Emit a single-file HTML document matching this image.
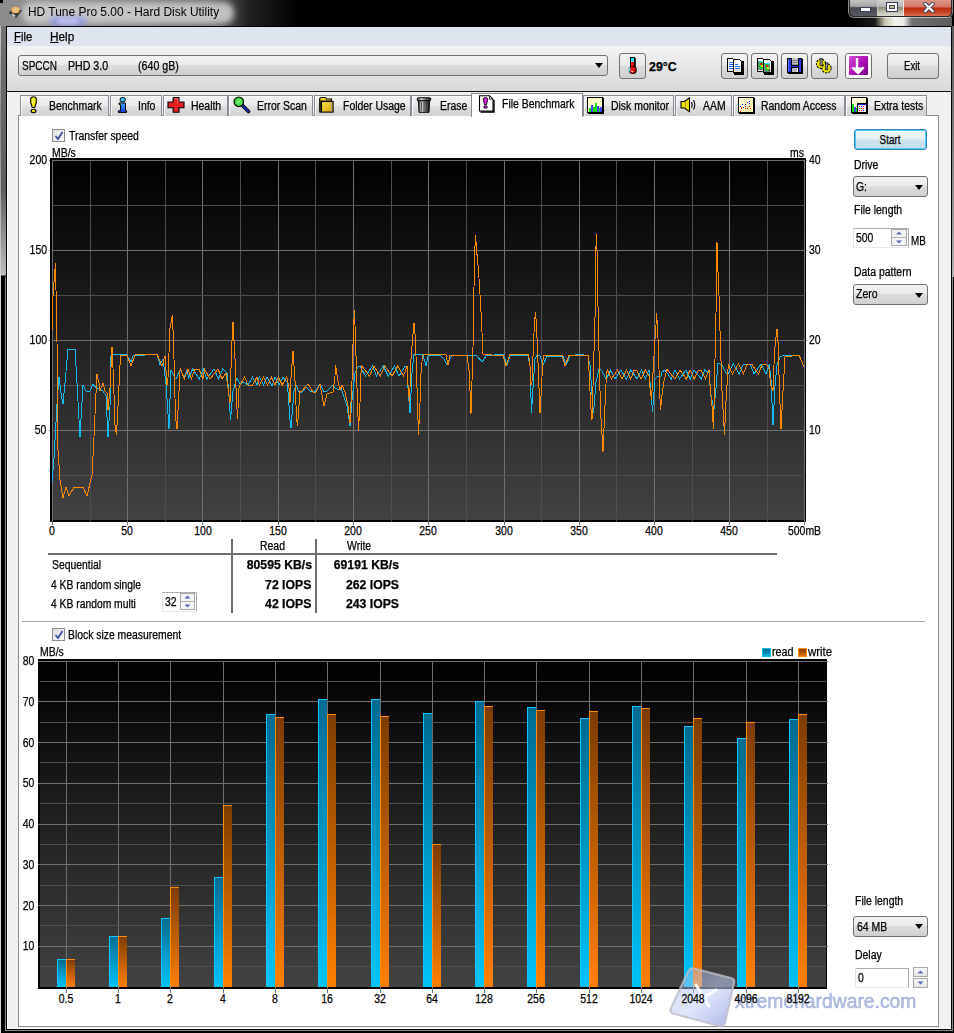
<!DOCTYPE html>
<html><head><meta charset="utf-8">
<style>
*{box-sizing:border-box}
html,body{margin:0;padding:0}
body{width:954px;height:1033px;overflow:hidden;position:relative;background:#000;font-family:"Liberation Sans",sans-serif;font-size:11px;color:#000}
.a{position:absolute}
.t{position:absolute;white-space:pre;line-height:1;font-size:12px;-webkit-text-stroke:0.25px currentColor}
.btn{position:absolute;border:1px solid #707070;border-radius:3px;background:linear-gradient(#f2f2f2 0%,#ebebeb 45%,#dddddd 50%,#cfcfcf 100%)}
.tab{position:absolute;top:95px;height:21px;border:1px solid #898c95;border-bottom:none;box-shadow:inset 1px 1px 0 rgba(255,255,255,.8);background:linear-gradient(#f2f2f2 0%,#ebebeb 45%,#dddddd 55%,#d2d2d2 100%)}
.tab .l{position:absolute;top:6px;white-space:pre;font-size:11px;line-height:1;letter-spacing:-0.3px}
.ic{position:absolute}
</style></head><body>
<!-- window frame -->
<div class="a" style="left:0;top:0;width:954px;height:277px;background:linear-gradient(to bottom,#7a7a7a 0,#6c6c6c 60px,#5e5e5e 190px,#bdbdbd 275px,#000 276px)"></div>
<div class="a" style="left:0;top:0;width:1px;height:277px;background:linear-gradient(#d8d8d8,#888 120px,#d0d0d0 270px)"></div>
<div class="a" style="left:0;top:0;width:954px;height:26px;background:linear-gradient(to right,#8c8c8c 0,#8e8e8e 30px,#6a6a6a 210px,#202020 250px,#000 300px,#000 100%)"></div>
<div class="a" style="left:0;top:0;width:3px;height:3px;background:#000"></div>
<div class="a" style="left:22px;top:2px;width:212px;height:22px;background:rgba(205,205,205,.9);border-radius:10px;filter:blur(3px)"></div>
<div class="a" style="left:50px;top:17px;width:36px;height:9px;background:rgba(120,130,255,.6);border-radius:6px;filter:blur(3px)"></div><div class="a" style="left:58px;top:19px;width:20px;height:5px;background:rgba(230,230,255,.6);border-radius:4px;filter:blur(2px)"></div>
<div class="a" style="left:849px;top:17px;width:103px;height:9px;background:linear-gradient(to right,#000 0,#181818 26px,#c8c8b0 36px,#f4f4ec 46px,#e8e8e8 55px,#707070 63px,#5c5c5c 100%)"></div>
<div class="a" style="left:952px;top:26px;width:2px;height:251px;background:linear-gradient(#5a5a5a,#9a9a9a 200px,#b0b0b0)"></div>
<!-- app icon -->
<svg class="a" style="left:8px;top:5px" width="15" height="14" viewBox="0 0 15 14">
<path d="M0.5 8 L6 2.5 L14 5.5 L8 13 Z" fill="#383838"/><ellipse cx="7.5" cy="5" rx="4.2" ry="3.2" fill="#f2b860"/><circle cx="7.5" cy="5" r="1.2" fill="#d0d0d0"/><path d="M4 9 L7 11.5" stroke="#c8c8c8" stroke-width="2"/>
</svg>
<!-- caption buttons -->
<div class="a" style="left:848px;top:0;width:105px;height:18px;border:1px solid rgba(255,255,255,.55);border-top:none;border-radius:0 0 6px 6px"></div>
<div class="a" style="left:849px;top:0;width:103px;height:17px;border:1px solid #2a2a2a;border-top:none;border-radius:0 0 5px 5px;overflow:hidden">
 <div class="a" style="left:0;top:0;width:28px;height:16px;background:linear-gradient(#c4c4c4 0,#a4a4a4 40%,#484850 48%,#5a5a62 100%);border-right:1px solid #c8c8c8"></div>
 <div class="a" style="left:28px;top:0;width:26px;height:16px;background:linear-gradient(#d0d0d0 0,#b4b4b4 40%,#8c8a70 48%,#c8c8b8 80%,#d8d8d8 100%);border-right:1px solid #f0e0e0"></div>
 <div class="a" style="left:54px;top:0;width:48px;height:16px;background:linear-gradient(#dc9888 0,#d47866 40%,#c02c10 52%,#c84a2c 80%,#d87050 100%)"></div>
 <div class="a" style="left:11px;top:8px;width:9px;height:3px;background:#fff;outline:1px solid #3a3f5c"></div>
 <div class="a" style="left:37px;top:3px;width:10px;height:8px;border:2px solid #fff;outline:1px solid #3a3f5c;background:#c8c4a0;box-shadow:inset 0 0 0 1px #3a3f5c"></div>
 <svg class="a" style="left:73px;top:2px" width="12" height="11" viewBox="0 0 12 11"><path d="M2.2 1.8L9.8 9.2M9.8 1.8L2.2 9.2" stroke="#3a3f5c" stroke-width="4" stroke-linecap="round"/><path d="M2.2 1.8L9.8 9.2M9.8 1.8L2.2 9.2" stroke="#fff" stroke-width="2.2" stroke-linecap="round"/></svg>
</div>
<!-- client -->
<div class="a" style="left:6px;top:26px;width:946px;height:1004px;background:#000"></div>
<div class="a" style="left:7px;top:27px;width:944px;height:1002px;background:#f0f0f0"></div>
<div class="a" style="left:0;top:277px;width:1px;height:756px;background:#d8d8d8"></div>
<div class="a" style="left:5px;top:277px;width:1px;height:754px;background:#8c8c8c"></div>
<div class="a" style="left:5px;top:1030px;width:948px;height:1px;background:#8c8c8c"></div>
<div class="a" style="left:952px;top:277px;width:1px;height:754px;background:#8c8c8c"></div>
<div class="a" style="left:7px;top:92px;width:1px;height:937px;background:#fff"></div>
<div class="a" style="left:7px;top:1028px;width:944px;height:1px;background:#fff"></div>
<!-- menu bar -->
<div class="a" style="left:7px;top:27px;width:944px;height:19px;background:#dee5ee"></div>
<!-- toolbar -->
<div class="a" style="left:7px;top:46px;width:944px;height:45px;background:linear-gradient(#f3f3f3,#d9d9d9)"></div>
<div class="a" style="left:7px;top:91px;width:944px;height:1px;background:#101010"></div>
<div class="btn" style="left:18px;top:55px;width:590px;height:21px"></div>
<svg class="a" style="left:595px;top:63px" width="9" height="6"><path d="M0 0H8L4 5Z" fill="#000"/></svg>
<div class="btn" style="left:619px;top:53px;width:27px;height:26px"></div>
<div class="btn" style="left:721px;top:53px;width:27px;height:26px"></div>
<div class="btn" style="left:751px;top:53px;width:27px;height:26px"></div>
<div class="btn" style="left:781px;top:53px;width:27px;height:26px"></div>
<div class="btn" style="left:811px;top:53px;width:27px;height:26px"></div>
<div class="btn" style="left:845px;top:53px;width:27px;height:26px"></div>
<div class="btn" style="left:887px;top:53px;width:52px;height:26px"></div>

<!-- tabs -->
<div class="a" style="left:18px;top:115px;width:921px;height:912px;border:1px solid #898c95;background:#fff"></div>
<div class="tab" style="left:20px;width:89px"></div>
<div class="tab" style="left:110px;width:52px"></div>
<div class="tab" style="left:163px;width:65px"></div>
<div class="tab" style="left:228px;width:85px"></div>
<div class="tab" style="left:314px;width:97px"></div>
<div class="tab" style="left:411px;width:61px"></div>
<div class="tab" style="left:583px;width:91px"></div>
<div class="tab" style="left:675px;width:57px"></div>
<div class="tab" style="left:733px;width:112px"></div>
<div class="tab" style="left:845px;width:82px"></div>
<div class="a" style="left:471px;top:93px;width:112px;height:24px;border:1px solid #898c95;border-bottom:none;background:#fff"></div>
<svg class="a" style="left:0;top:0" width="954" height="200" viewBox="0 0 954 200"><defs>
<linearGradient id="docg" x1="0" y1="0" x2="0" y2="1"><stop offset="0" stop-color="#fff"/><stop offset="1" stop-color="#e0e0e0"/></linearGradient>
<linearGradient id="purg" x1="0" y1="0" x2="1" y2="1"><stop offset="0" stop-color="#d050d8"/><stop offset=".5" stop-color="#b010b8"/><stop offset="1" stop-color="#780080"/></linearGradient>
<linearGradient id="infog" x1="0" y1="0" x2="0" y2="1"><stop offset="0" stop-color="#40b0ff"/><stop offset="1" stop-color="#1040e8"/></linearGradient>
<linearGradient id="foldg" x1="0" y1="0" x2="1" y2="1"><stop offset="0" stop-color="#f8e050"/><stop offset="1" stop-color="#d8a000"/></linearGradient>
<linearGradient id="trashg" x1="0" y1="0" x2="1" y2="0"><stop offset="0" stop-color="#404040"/><stop offset=".3" stop-color="#e0e0e0"/><stop offset=".6" stop-color="#707070"/><stop offset="1" stop-color="#202020"/></linearGradient>
<linearGradient id="ylg" x1="0" y1="0" x2="1" y2="1"><stop offset="0" stop-color="#ffffe8"/><stop offset="1" stop-color="#fff8a0"/></linearGradient>
</defs><g shape-rendering="crispEdges">
<rect x="630" y="57" width="5" height="13" fill="#000"/>
<rect x="631" y="58" width="3" height="4" fill="#30e0f0"/>
<rect x="631" y="62" width="3" height="8" fill="#f01010"/>
<rect x="635" y="58" width="1" height="12" fill="#303030"/>
</g>
<circle cx="632.8" cy="70" r="4" fill="#000"/>
<circle cx="632.6" cy="69.8" r="3.1" fill="#f01010"/>
<rect x="628.6" y="67.5" width="1.6" height="4" fill="#50d8e8"/>
<path d="M631 70.5 Q631.5 72 633 71.8" stroke="#fff" stroke-width="1" fill="none"/>
<g shape-rendering="crispEdges">
<path d="M727.5 58.5H732.5L734.5 60.5V71.5H727.5Z" fill="#fff" stroke="#000" stroke-width="1"/>
<rect x="735" y="60" width="1" height="12" fill="#000"/>
<rect x="729" y="62" width="4" height="1" fill="#1a6cff"/>
<rect x="729" y="64" width="4" height="1" fill="#1a6cff"/>
<rect x="729" y="66" width="4" height="1" fill="#1a6cff"/>
<rect x="729" y="68" width="4" height="1" fill="#1a6cff"/>
<path d="M733.5 59.5H739.5L741.5 61.5V72.5H733.5Z" fill="url(#docg)" stroke="#000"/>
<rect x="742" y="61" width="1.5" height="13" fill="#000"/><rect x="734" y="73" width="9.5" height="1.5" fill="#000"/>
<rect x="735" y="64" width="3" height="1" fill="#1a6cff"/><rect x="735" y="66" width="5" height="1" fill="#1a6cff"/><rect x="735" y="68" width="5" height="1" fill="#1a6cff"/><rect x="735" y="70" width="5" height="1" fill="#e8d8c8"/>
<path d="M757.5 58.5H762.5L764.5 60.5V71.5H757.5Z" fill="#fff" stroke="#000" stroke-width="1"/>
<rect x="765" y="60" width="1" height="12" fill="#000"/>
<rect x="758.5" y="61.5" width="5" height="8" fill="#20c040" stroke="#808080" stroke-width="1"/>
<rect x="759" y="61" width="5" height="1" fill="#20e0ff"/>
<rect x="760" y="63" width="2" height="2" fill="#e02020"/><rect x="761" y="65" width="2" height="2" fill="#f0e000"/>
<path d="M763.5 59.5H769.5L771.5 61.5V72.5H763.5Z" fill="url(#docg)" stroke="#000"/>
<rect x="772" y="61" width="1.5" height="13" fill="#000"/><rect x="764" y="73" width="9.5" height="1.5" fill="#000"/>
<rect x="764.5" y="63.5" width="5" height="8" fill="#20c040" stroke="#808080" stroke-width="1"/>
<rect x="765" y="63" width="5" height="1" fill="#20e0ff"/>
<rect x="766" y="65" width="2" height="2" fill="#e02020"/><rect x="767" y="67" width="2" height="2" fill="#f0e000"/><rect x="769" y="70" width="1" height="1" fill="#000"/>
<rect x="787" y="58" width="15" height="15" fill="#000"/>
<rect x="788" y="59" width="13" height="13" fill="#2838e8"/>
<rect x="788" y="59" width="1" height="12" fill="#6070ff"/>
<rect x="791" y="58" width="8" height="8" fill="#000"/><rect x="792" y="58" width="6" height="7" fill="#c8c8c8"/>
<rect x="792" y="60" width="6" height="1" fill="#808080"/><rect x="792" y="62" width="6" height="1" fill="#808080"/><rect x="792" y="64" width="6" height="1" fill="#909090"/>
<rect x="791" y="67" width="8" height="6" fill="#000"/><rect x="792" y="68" width="6" height="4" fill="#b8b8b8"/><rect x="797" y="68" width="1" height="4" fill="#fff"/>
<rect x="802" y="59" width="1" height="15" fill="#000"/><rect x="788" y="73" width="15" height="1" fill="#000"/>
</g>
<circle cx="821" cy="63.8" r="4.6" fill="#f0e800" stroke="#000" stroke-width="1.1" stroke-dasharray="2 1.2"/>
<circle cx="821" cy="63.8" r="3.2" fill="#e8e000"/>
<rect x="820" y="58.3" width="2.2" height="7" fill="#909090" stroke="#000" stroke-width=".6"/>
<circle cx="826.6" cy="68.3" r="4.6" fill="#f0e800" stroke="#000" stroke-width="1.1" stroke-dasharray="2 1.2"/>
<circle cx="826.6" cy="68.3" r="3.2" fill="#e8e000"/>
<rect x="825.6" y="62.8" width="2.2" height="7" fill="#909090" stroke="#000" stroke-width=".6"/>
<rect x="846" y="54" width="25" height="24" rx="2" fill="#f8f8f8"/>
<rect x="849" y="56" width="19" height="19" rx="1" fill="url(#purg)"/>
<path d="M857 58V68M852.3 67.3L858 73L863.7 67.3" stroke="#fff" stroke-width="2.4" fill="none"/>
<path d="M852 67.5H864L858 73.5Z" fill="#fff"/>
<path d="M30.6 99 Q31 96.8 33.5 96.8 Q36 96.8 36.4 99 L36.2 103 L34.7 107.5 H32.3 L30.8 103 Z" fill="#f0f000" stroke="#000" stroke-width="1.1"/>
<path d="M32.2 98.5 H33.4 V104 H32.6Z" fill="#ffffa0"/>
<ellipse cx="33.5" cy="111" rx="2.4" ry="1.7" fill="#e8e800" stroke="#000" stroke-width="1.1"/>
<rect x="120.2" y="97.6" width="5" height="4.2" rx="1.5" fill="#40c8ff" stroke="#000" stroke-width="1"/>
<path d="M119 103 H125.5 V110.8 H126.6 V112.4 H118.4 V110.8 H120.6 V104.6 H119Z" fill="url(#infog)" stroke="#000" stroke-width="1"/>
<path d="M173.2 97.6H179V102H184V107.8H179V112.3H173.2V107.8H168V102H173.2Z" fill="#e82020" stroke="#000" stroke-width="1.1"/>
<path d="M174 98.5H178V103" stroke="#ff8080" stroke-width=".8" fill="none"/>
<path d="M242.5 105.5 L248.5 111.5" stroke="#000" stroke-width="3.6" stroke-linecap="round"/>
<path d="M242.5 105.5 L248.3 111.3" stroke="#1828a8" stroke-width="2" stroke-linecap="round"/>
<circle cx="238.8" cy="101.8" r="4.8" fill="#30c030" stroke="#000" stroke-width="1.1"/>
<circle cx="238.8" cy="101.8" r="3.2" fill="#50e050"/>
<path d="M237 103.5 L240.5 100" stroke="#c0ffc0" stroke-width="1"/>
<path d="M319.7 98.7 Q320 97.5 321.5 97.5 H325 Q326 97.5 326.5 99 H331.5 V101 H321 V112 H319.7Z" fill="#f0d030" stroke="#000" stroke-width="1.1"/>
<rect x="321.5" y="101.5" width="11.6" height="10.6" fill="url(#foldg)" stroke="#000" stroke-width="1.1"/>
<rect x="331" y="102.2" width=".8" height="9.4" fill="#a0a0a0"/>
<rect x="417.3" y="97.8" width="13.4" height="3" rx=".8" fill="url(#trashg)" stroke="#000" stroke-width="1"/>
<path d="M418.5 100.8 H429.5 L429 112.3 H419Z" fill="url(#trashg)" stroke="#000" stroke-width="1"/>
<path d="M421.5 102V111M424 102V111M426.5 102V111" stroke="#404040" stroke-width=".8"/>
<path d="M479.5 95.7H489.5L493 99.2V111H479.5Z" fill="#fff" stroke="#000" stroke-width="1.1"/>
<path d="M494 100V112H480.5" stroke="#000" stroke-width="1.4" fill="none"/>
<path d="M489.5 95.7V99.2H493" stroke="#000" stroke-width=".8" fill="none"/>
<path d="M483.3 99.3 Q483.5 97.5 485.5 97.5 Q487.5 97.5 487.7 99.3 L486.5 104.5 H484.5Z" fill="#e020e8" stroke="#000" stroke-width=".9"/>
<ellipse cx="485.5" cy="107" rx="1.8" ry="1.3" fill="#e020e8" stroke="#000" stroke-width=".9"/>
<g shape-rendering="crispEdges">
<rect x="587.5" y="97.5" width="15" height="15" fill="#ffffc8" stroke="#000"/>
<rect x="603" y="98" width="1" height="15" fill="#000"/><rect x="588" y="113" width="16" height="1" fill="#000"/>
<rect x="589" y="108" width="2" height="4" fill="#10e010"/>
<rect x="591" y="105" width="2" height="7" fill="#4040ff"/>
<rect x="593" y="107" width="2" height="5" fill="#10e010"/>
<rect x="595" y="103" width="2" height="9" fill="#10e010"/>
<rect x="597" y="106" width="2" height="6" fill="#4040ff"/>
<rect x="599" y="108" width="2" height="4" fill="#10e010"/>
<rect x="600" y="107" width="2" height="5" fill="#4040ff"/>
<rect x="738.5" y="97.5" width="15" height="15" fill="url(#ylg)" stroke="#000"/>
<rect x="754" y="98" width="1" height="15" fill="#000"/><rect x="739" y="113" width="16" height="1" fill="#000"/>
<rect x="740" y="111" width="1" height="1" fill="#f00"/>
<rect x="741" y="108" width="1" height="1" fill="#f00"/>
<rect x="741" y="107" width="1" height="1" fill="#f00"/>
<rect x="740" y="106" width="1" height="1" fill="#00f"/>
<rect x="742" y="104" width="1" height="1" fill="#00f"/>
<rect x="743" y="107" width="1" height="1" fill="#00f"/>
<rect x="745" y="108" width="1" height="1" fill="#f00"/>
<rect x="745" y="106" width="1" height="1" fill="#f00"/>
<rect x="745" y="104" width="1" height="1" fill="#00f"/>
<rect x="747" y="102" width="1" height="1" fill="#00f"/>
<rect x="747" y="108" width="1" height="1" fill="#f00"/>
<rect x="749" y="101" width="1" height="1" fill="#00f"/>
<rect x="749" y="103" width="1" height="1" fill="#00f"/>
<rect x="749" y="106" width="1" height="1" fill="#f00"/>
<rect x="750" y="108" width="1" height="1" fill="#f00"/>
<rect x="851.5" y="97.5" width="15" height="15" fill="url(#ylg)" stroke="#000"/>
<rect x="867" y="98" width="1" height="15" fill="#000"/><rect x="852" y="113" width="16" height="1" fill="#000"/>
<rect x="852" y="104" width="2" height="8" fill="#10e010"/><rect x="854" y="107" width="2" height="5" fill="#4040ff"/><rect x="856" y="108" width="1" height="4" fill="#10e010"/>
<rect x="857.5" y="103.5" width="9" height="9" fill="#f0f0f8" stroke="#000"/>
<rect x="858" y="104" width="8" height="1" fill="#1010e0"/>
<rect x="859" y="106" width="1" height="1" fill="#f00"/>
<rect x="861" y="106" width="1" height="1" fill="#00f"/>
<rect x="863" y="106" width="1" height="1" fill="#f00"/>
<rect x="859" y="108" width="1" height="1" fill="#0c0"/>
<rect x="861" y="108" width="1" height="1" fill="#f00"/>
<rect x="863" y="108" width="1" height="1" fill="#f00"/>
<rect x="859" y="110" width="1" height="1" fill="#f00"/>
<rect x="861" y="110" width="1" height="1" fill="#f00"/>
<rect x="863" y="110" width="1" height="1" fill="#00f"/>
</g>
<path d="M681 101.5H684.5L689.5 97.8V111.6L684.5 108H681Z" fill="#f0e000" stroke="#000" stroke-width="1.1"/>
<path d="M685.5 102V107.5" stroke="#a09000" stroke-width=".8"/>
<path d="M691.5 102 Q693 104.8 691.5 107.6" stroke="#000" stroke-width="1.1" fill="none"/>
<path d="M693.5 100 Q696 104.8 693.5 109.6" stroke="#000" stroke-width="1.1" fill="none"/></svg>

<!-- file benchmark content -->
<div class="a" style="left:52px;top:129px;width:13px;height:13px;border:1px solid #8e8f8f;background:linear-gradient(135deg,#dcdcdc,#fafafa)"></div>
<svg class="a" style="left:54px;top:131px" width="10" height="10" viewBox="0 0 10 10"><path d="M1.5 5L4 8L8.5 1" stroke="#3a4ea0" stroke-width="1.8" fill="none"/></svg>

<svg id="charts" width="954" height="1033" viewBox="0 0 954 1033" style="position:absolute;left:0;top:0" shape-rendering="crispEdges">
<defs>
<linearGradient id="g1" x1="0" y1="0" x2="0" y2="1"><stop offset="0" stop-color="#000"/><stop offset="1" stop-color="#424242"/></linearGradient>
<linearGradient id="g2" x1="0" y1="0" x2="0" y2="1"><stop offset="0" stop-color="#000"/><stop offset="1" stop-color="#424242"/></linearGradient>
<linearGradient id="gb" x1="0" y1="0" x2="0" y2="1"><stop offset="0" stop-color="#006a90"/><stop offset="1" stop-color="#00c4f8"/></linearGradient>
<linearGradient id="go" x1="0" y1="0" x2="0" y2="1"><stop offset="0" stop-color="#7c3c00"/><stop offset="1" stop-color="#ff8000"/></linearGradient>
</defs>
<rect x="50" y="158" width="756" height="364" fill="#000"/>
<rect x="52" y="160" width="753" height="360" fill="url(#g1)"/>
<line x1="52.5" y1="160" x2="52.5" y2="520" stroke="#707070" stroke-width="1"/>
<line x1="90.5" y1="160" x2="90.5" y2="520" stroke="#4e4e4e" stroke-width="1"/>
<line x1="127.5" y1="160" x2="127.5" y2="520" stroke="#707070" stroke-width="1"/>
<line x1="165.5" y1="160" x2="165.5" y2="520" stroke="#4e4e4e" stroke-width="1"/>
<line x1="202.5" y1="160" x2="202.5" y2="520" stroke="#707070" stroke-width="1"/>
<line x1="240.5" y1="160" x2="240.5" y2="520" stroke="#4e4e4e" stroke-width="1"/>
<line x1="278.5" y1="160" x2="278.5" y2="520" stroke="#707070" stroke-width="1"/>
<line x1="315.5" y1="160" x2="315.5" y2="520" stroke="#4e4e4e" stroke-width="1"/>
<line x1="353.5" y1="160" x2="353.5" y2="520" stroke="#707070" stroke-width="1"/>
<line x1="391.5" y1="160" x2="391.5" y2="520" stroke="#4e4e4e" stroke-width="1"/>
<line x1="428.5" y1="160" x2="428.5" y2="520" stroke="#707070" stroke-width="1"/>
<line x1="466.5" y1="160" x2="466.5" y2="520" stroke="#4e4e4e" stroke-width="1"/>
<line x1="504.5" y1="160" x2="504.5" y2="520" stroke="#707070" stroke-width="1"/>
<line x1="541.5" y1="160" x2="541.5" y2="520" stroke="#4e4e4e" stroke-width="1"/>
<line x1="579.5" y1="160" x2="579.5" y2="520" stroke="#707070" stroke-width="1"/>
<line x1="616.5" y1="160" x2="616.5" y2="520" stroke="#4e4e4e" stroke-width="1"/>
<line x1="654.5" y1="160" x2="654.5" y2="520" stroke="#707070" stroke-width="1"/>
<line x1="692.5" y1="160" x2="692.5" y2="520" stroke="#4e4e4e" stroke-width="1"/>
<line x1="729.5" y1="160" x2="729.5" y2="520" stroke="#707070" stroke-width="1"/>
<line x1="767.5" y1="160" x2="767.5" y2="520" stroke="#4e4e4e" stroke-width="1"/>
<line x1="804.5" y1="160" x2="804.5" y2="520" stroke="#707070" stroke-width="1"/>
<line x1="52" y1="160.5" x2="805" y2="160.5" stroke="#707070" stroke-width="1"/>
<line x1="52" y1="205.5" x2="805" y2="205.5" stroke="#4e4e4e" stroke-width="1"/>
<line x1="52" y1="250.5" x2="805" y2="250.5" stroke="#707070" stroke-width="1"/>
<line x1="52" y1="295.5" x2="805" y2="295.5" stroke="#4e4e4e" stroke-width="1"/>
<line x1="52" y1="340.5" x2="805" y2="340.5" stroke="#707070" stroke-width="1"/>
<line x1="52" y1="385.5" x2="805" y2="385.5" stroke="#4e4e4e" stroke-width="1"/>
<line x1="52" y1="430.5" x2="805" y2="430.5" stroke="#707070" stroke-width="1"/>
<line x1="52" y1="475.5" x2="805" y2="475.5" stroke="#4e4e4e" stroke-width="1"/>
<line x1="52" y1="520.5" x2="805" y2="520.5" stroke="#707070" stroke-width="1"/>
<rect x="50" y="158" width="756" height="2" fill="#000"/>
<rect x="50" y="158" width="2" height="364" fill="#000"/>
<rect x="50" y="520" width="756" height="2" fill="#000"/>
<rect x="805" y="158" width="1" height="364" fill="#000"/>
<line x1="52.5" y1="520" x2="52.5" y2="525" stroke="#707070"/>
<line x1="90.5" y1="520" x2="90.5" y2="522" stroke="#404040"/>
<line x1="127.5" y1="520" x2="127.5" y2="525" stroke="#707070"/>
<line x1="165.5" y1="520" x2="165.5" y2="522" stroke="#404040"/>
<line x1="202.5" y1="520" x2="202.5" y2="525" stroke="#707070"/>
<line x1="240.5" y1="520" x2="240.5" y2="522" stroke="#404040"/>
<line x1="278.5" y1="520" x2="278.5" y2="525" stroke="#707070"/>
<line x1="315.5" y1="520" x2="315.5" y2="522" stroke="#404040"/>
<line x1="353.5" y1="520" x2="353.5" y2="525" stroke="#707070"/>
<line x1="391.5" y1="520" x2="391.5" y2="522" stroke="#404040"/>
<line x1="428.5" y1="520" x2="428.5" y2="525" stroke="#707070"/>
<line x1="466.5" y1="520" x2="466.5" y2="522" stroke="#404040"/>
<line x1="504.5" y1="520" x2="504.5" y2="525" stroke="#707070"/>
<line x1="541.5" y1="520" x2="541.5" y2="522" stroke="#404040"/>
<line x1="579.5" y1="520" x2="579.5" y2="525" stroke="#707070"/>
<line x1="616.5" y1="520" x2="616.5" y2="522" stroke="#404040"/>
<line x1="654.5" y1="520" x2="654.5" y2="525" stroke="#707070"/>
<line x1="692.5" y1="520" x2="692.5" y2="522" stroke="#404040"/>
<line x1="729.5" y1="520" x2="729.5" y2="525" stroke="#707070"/>
<line x1="767.5" y1="520" x2="767.5" y2="522" stroke="#404040"/>
<line x1="804.5" y1="520" x2="804.5" y2="525" stroke="#707070"/>
<line x1="49" y1="160.5" x2="50" y2="160.5" stroke="#707070"/>
<line x1="806" y1="160.5" x2="807" y2="160.5" stroke="#707070"/>
<line x1="49" y1="250.5" x2="50" y2="250.5" stroke="#707070"/>
<line x1="806" y1="250.5" x2="807" y2="250.5" stroke="#707070"/>
<line x1="49" y1="340.5" x2="50" y2="340.5" stroke="#707070"/>
<line x1="806" y1="340.5" x2="807" y2="340.5" stroke="#707070"/>
<line x1="49" y1="430.5" x2="50" y2="430.5" stroke="#707070"/>
<line x1="806" y1="430.5" x2="807" y2="430.5" stroke="#707070"/>
<g shape-rendering="crispEdges"><polyline points="52.0,483.0 54.0,458.0 57.0,404.0 59.0,377.0 61.0,393.0 63.0,404.0 65.0,383.0 68.0,349.0 75.0,349.0 77.0,383.0 80.0,437.0 83.0,385.0 86.0,391.0 90.0,391.0 93.0,384.0 96.0,388.0 99.0,389.0 103.0,391.0 106.0,396.0 108.0,437.0 110.0,406.0 111.0,356.0 113.0,354.0 127.0,355.0 131.0,362.0 133.0,356.0 157.0,354.0 160.0,365.0 163.0,359.0 166.0,384.0 169.0,429.0 171.0,370.0 175.0,378.0 176.0,379.0 180.3,369.0 184.0,378.0 187.6,369.0 188.3,379.0 192.7,369.0 199.3,379.0 203.4,369.0 206.7,379.0 214.0,369.0 218.4,379.0 222.8,369.0 227.0,373.0 229.0,395.0 230.5,420.0 233.0,391.0 237.0,378.0 240.0,384.0 244.0,382.0 248.0,385.0 252.5,377.0 257.0,385.0 259.4,377.0 263.5,385.0 267.0,377.0 272.0,386.0 275.0,377.0 279.0,385.0 283.0,377.0 286.0,381.0 287.0,382.0 288.0,392.0 290.0,420.0 291.0,428.0 293.0,403.0 294.0,391.0 296.0,385.0 299.0,392.0 302.0,392.0 306.0,387.0 310.0,391.0 315.0,392.0 320.0,384.0 324.0,392.0 327.0,391.0 333.0,385.0 335.0,388.0 339.0,390.0 341.0,388.0 347.0,406.0 350.0,426.0 352.0,400.0 355.0,373.0 358.0,367.0 358.0,367.0 360.0,366.0 365.4,376.0 372.6,366.0 376.4,376.0 383.3,366.0 388.3,376.0 394.6,366.0 399.0,376.0 405.3,366.0 407.0,366.0 408.0,388.0 410.0,413.0 412.0,373.0 414.0,354.0 423.0,355.0 426.0,366.0 428.0,356.0 440.0,355.0 444.0,359.0 447.0,365.0 452.0,355.0 473.0,355.0 477.0,356.0 482.0,362.0 486.0,356.0 503.0,354.0 507.0,365.0 510.0,356.0 528.0,355.0 530.0,366.0 531.5,413.0 533.0,388.0 535.0,359.0 537.0,355.0 540.0,356.0 543.0,365.0 547.0,356.0 563.0,356.0 566.0,365.0 570.0,356.0 580.0,354.0 588.0,356.0 590.0,365.0 592.0,395.0 593.5,413.0 596.0,382.0 599.0,369.0 601.3,370.0 606.3,379.0 610.7,370.0 615.0,379.0 620.8,370.0 626.4,379.0 630.8,370.0 637.1,379.0 641.5,370.0 645.3,379.0 649.0,370.0 649.0,372.0 651.0,391.0 652.5,412.0 655.0,379.0 658.0,376.0 661.0,376.0 662.0,372.0 665.0,370.0 671.3,379.0 675.0,370.0 679.5,379.0 685.8,370.0 690.2,379.0 694.0,370.0 701.2,379.0 704.7,370.0 709.0,373.0 711.0,395.0 712.5,403.0 714.0,409.0 716.0,388.0 718.0,363.0 722.0,365.0 726.0,373.0 727.7,374.0 733.3,364.0 739.3,374.0 743.4,364.0 750.3,364.0 754.0,374.0 761.0,364.0 766.0,374.0 769.2,364.0 771.0,380.0 773.0,425.0 775.0,386.0 777.0,365.0 780.0,357.0 784.0,355.0 799.0,355.0 804.0,367.0" fill="none" stroke="#12bcf2" stroke-width="1"/>
<polyline points="52.0,331.0 53.0,296.0 54.5,275.0 55.5,263.0 56.0,290.0 57.0,342.0 58.0,450.0 60.0,480.0 63.0,498.0 66.0,487.0 69.0,496.0 74.0,487.0 83.0,487.0 87.0,496.0 92.0,475.0 94.0,437.0 96.0,393.0 97.0,374.0 99.0,383.0 100.0,391.0 103.0,383.0 105.0,391.0 107.0,393.0 108.0,410.0 110.0,388.0 112.0,347.0 113.5,379.0 115.0,425.0 116.5,435.0 118.0,406.0 120.0,365.0 121.0,355.0 127.0,355.0 131.0,366.0 135.0,355.0 157.0,354.0 162.0,366.0 165.0,356.0 167.0,385.0 168.0,378.0 170.0,328.0 172.5,315.0 174.0,359.0 175.5,417.0 177.0,429.0 179.0,391.0 180.0,370.0 180.6,369.0 184.3,379.0 188.0,369.0 191.3,379.0 195.0,369.0 199.0,369.0 203.0,379.0 204.5,369.0 210.0,379.0 218.0,369.0 222.0,379.0 226.0,373.0 228.0,388.0 230.0,403.0 231.5,351.0 233.0,322.0 235.0,359.0 236.0,388.0 237.5,419.0 239.0,388.0 240.5,384.0 244.6,377.0 248.0,385.0 252.5,385.0 256.9,377.0 259.4,385.0 263.5,377.0 267.6,385.0 271.3,377.0 275.0,385.0 278.3,377.0 282.3,385.0 286.4,377.0 287.0,378.0 289.0,388.0 290.0,403.0 291.0,378.0 293.0,351.0 295.0,381.0 296.5,417.0 297.5,426.0 300.0,391.0 302.0,391.0 308.0,384.0 313.0,392.0 316.0,392.0 320.0,384.0 324.0,406.0 327.0,394.0 333.0,392.0 335.0,376.0 335.5,365.0 338.0,381.0 340.0,390.0 342.0,385.0 345.0,392.0 348.0,406.0 350.0,423.0 352.0,381.0 353.5,326.0 354.5,310.0 356.0,356.0 357.0,388.0 358.5,431.0 360.0,403.0 361.0,373.0 361.9,366.0 369.5,376.0 373.9,366.0 380.2,376.0 384.6,366.0 392.1,376.0 397.8,366.0 403.4,376.0 407.2,366.0 408.0,385.0 409.5,403.0 411.0,359.0 413.0,334.0 414.0,323.0 415.5,340.0 417.0,388.0 418.0,420.0 418.5,435.0 420.0,403.0 421.0,373.0 422.5,356.0 424.0,354.0 446.0,355.0 448.0,365.0 450.0,355.0 467.0,355.0 469.0,370.0 470.0,391.0 471.0,414.0 472.0,381.0 473.0,347.0 474.5,258.0 475.5,235.0 476.5,249.0 478.0,265.0 479.5,285.0 481.0,312.0 482.5,342.0 483.0,354.0 500.0,356.0 503.0,355.0 506.0,366.0 510.0,354.0 528.5,354.0 530.0,366.0 531.0,385.0 532.0,382.0 533.5,344.0 534.5,322.0 535.5,312.0 536.5,325.0 537.5,350.0 539.0,388.0 540.0,413.0 541.5,388.0 542.5,366.0 543.5,355.0 562.0,355.0 565.0,366.0 569.0,355.0 588.0,355.0 589.5,379.0 590.5,403.0 592.0,420.0 595.5,300.0 595.5,258.0 596.5,234.0 597.0,250.0 597.5,282.0 598.5,330.0 600.5,410.0 603.0,452.0 605.0,405.0 606.5,373.0 607.5,370.0 611.3,379.0 617.6,370.0 622.0,379.0 626.4,370.0 630.8,379.0 634.0,370.0 636.5,370.0 640.9,379.0 645.3,370.0 649.0,376.0 650.0,388.0 651.5,400.0 653.0,373.0 654.5,347.0 656.0,325.0 656.5,313.0 657.5,326.0 658.5,350.0 659.5,388.0 660.5,410.0 662.0,395.0 664.0,381.0 667.0,369.0 667.5,370.0 675.0,379.0 680.0,370.0 686.4,379.0 690.0,370.0 694.3,379.0 698.4,370.0 701.0,370.0 705.3,379.0 709.0,370.0 709.0,370.0 710.0,385.0 712.0,406.0 713.5,429.0 715.0,359.0 716.5,290.0 717.0,242.0 717.5,260.0 719.0,295.0 720.0,331.0 722.0,391.0 724.5,435.0 726.0,401.0 728.0,369.0 728.3,364.0 732.4,374.0 738.4,364.0 743.4,374.0 747.2,364.0 751.6,364.0 758.5,374.0 762.3,364.0 766.7,364.0 769.0,369.0 771.0,386.0 773.0,391.0 774.5,352.0 776.0,337.0 777.0,329.0 778.0,342.0 779.5,391.0 781.0,429.0 783.0,391.0 785.0,357.0 799.0,355.0 804.0,367.0" fill="none" stroke="#ff8a00" stroke-width="1"/></g>
<rect x="38" y="659" width="789" height="330" fill="#000"/>
<rect x="40" y="661" width="786" height="326" fill="url(#g2)"/>
<line x1="66.5" y1="661" x2="66.5" y2="993" stroke="#6e6e6e"/>
<line x1="118.5" y1="661" x2="118.5" y2="993" stroke="#6e6e6e"/>
<line x1="170.5" y1="661" x2="170.5" y2="993" stroke="#6e6e6e"/>
<line x1="223.5" y1="661" x2="223.5" y2="993" stroke="#6e6e6e"/>
<line x1="275.5" y1="661" x2="275.5" y2="993" stroke="#6e6e6e"/>
<line x1="327.5" y1="661" x2="327.5" y2="993" stroke="#6e6e6e"/>
<line x1="380.5" y1="661" x2="380.5" y2="993" stroke="#6e6e6e"/>
<line x1="432.5" y1="661" x2="432.5" y2="993" stroke="#6e6e6e"/>
<line x1="484.5" y1="661" x2="484.5" y2="993" stroke="#6e6e6e"/>
<line x1="536.5" y1="661" x2="536.5" y2="993" stroke="#6e6e6e"/>
<line x1="589.5" y1="661" x2="589.5" y2="993" stroke="#6e6e6e"/>
<line x1="641.5" y1="661" x2="641.5" y2="993" stroke="#6e6e6e"/>
<line x1="693.5" y1="661" x2="693.5" y2="993" stroke="#6e6e6e"/>
<line x1="746.5" y1="661" x2="746.5" y2="993" stroke="#6e6e6e"/>
<line x1="798.5" y1="661" x2="798.5" y2="993" stroke="#6e6e6e"/>
<line x1="40" y1="966.5" x2="826" y2="966.5" stroke="#505050"/>
<line x1="38" y1="946.5" x2="826" y2="946.5" stroke="#707070"/>
<line x1="40" y1="925.5" x2="826" y2="925.5" stroke="#505050"/>
<line x1="38" y1="905.5" x2="826" y2="905.5" stroke="#707070"/>
<line x1="40" y1="885.5" x2="826" y2="885.5" stroke="#505050"/>
<line x1="38" y1="864.5" x2="826" y2="864.5" stroke="#707070"/>
<line x1="40" y1="844.5" x2="826" y2="844.5" stroke="#505050"/>
<line x1="38" y1="824.5" x2="826" y2="824.5" stroke="#707070"/>
<line x1="40" y1="803.5" x2="826" y2="803.5" stroke="#505050"/>
<line x1="38" y1="783.5" x2="826" y2="783.5" stroke="#707070"/>
<line x1="40" y1="762.5" x2="826" y2="762.5" stroke="#505050"/>
<line x1="38" y1="742.5" x2="826" y2="742.5" stroke="#707070"/>
<line x1="40" y1="722.5" x2="826" y2="722.5" stroke="#505050"/>
<line x1="38" y1="701.5" x2="826" y2="701.5" stroke="#707070"/>
<line x1="40" y1="681.5" x2="826" y2="681.5" stroke="#505050"/>
<line x1="38" y1="661.5" x2="826" y2="661.5" stroke="#707070"/>
<rect x="38" y="659" width="789" height="2" fill="#000"/>
<rect x="38" y="659" width="2" height="330" fill="#000"/>
<rect x="38" y="987" width="789" height="2" fill="#000"/>
<rect x="826" y="659" width="1" height="330" fill="#000"/>
<line x1="66.5" y1="987" x2="66.5" y2="993" stroke="#707070"/>
<line x1="118.5" y1="987" x2="118.5" y2="993" stroke="#707070"/>
<line x1="170.5" y1="987" x2="170.5" y2="993" stroke="#707070"/>
<line x1="223.5" y1="987" x2="223.5" y2="993" stroke="#707070"/>
<line x1="275.5" y1="987" x2="275.5" y2="993" stroke="#707070"/>
<line x1="327.5" y1="987" x2="327.5" y2="993" stroke="#707070"/>
<line x1="380.5" y1="987" x2="380.5" y2="993" stroke="#707070"/>
<line x1="432.5" y1="987" x2="432.5" y2="993" stroke="#707070"/>
<line x1="484.5" y1="987" x2="484.5" y2="993" stroke="#707070"/>
<line x1="536.5" y1="987" x2="536.5" y2="993" stroke="#707070"/>
<line x1="589.5" y1="987" x2="589.5" y2="993" stroke="#707070"/>
<line x1="641.5" y1="987" x2="641.5" y2="993" stroke="#707070"/>
<line x1="693.5" y1="987" x2="693.5" y2="993" stroke="#707070"/>
<line x1="746.5" y1="987" x2="746.5" y2="993" stroke="#707070"/>
<line x1="798.5" y1="987" x2="798.5" y2="993" stroke="#707070"/>
<line x1="38" y1="946.5" x2="40" y2="946.5" stroke="#707070"/>
<line x1="826" y1="946.5" x2="828" y2="946.5" stroke="#707070"/>
<line x1="38" y1="905.5" x2="40" y2="905.5" stroke="#707070"/>
<line x1="826" y1="905.5" x2="828" y2="905.5" stroke="#707070"/>
<line x1="38" y1="864.5" x2="40" y2="864.5" stroke="#707070"/>
<line x1="826" y1="864.5" x2="828" y2="864.5" stroke="#707070"/>
<line x1="38" y1="824.5" x2="40" y2="824.5" stroke="#707070"/>
<line x1="826" y1="824.5" x2="828" y2="824.5" stroke="#707070"/>
<line x1="38" y1="783.5" x2="40" y2="783.5" stroke="#707070"/>
<line x1="826" y1="783.5" x2="828" y2="783.5" stroke="#707070"/>
<line x1="38" y1="742.5" x2="40" y2="742.5" stroke="#707070"/>
<line x1="826" y1="742.5" x2="828" y2="742.5" stroke="#707070"/>
<line x1="38" y1="701.5" x2="40" y2="701.5" stroke="#707070"/>
<line x1="826" y1="701.5" x2="828" y2="701.5" stroke="#707070"/>
<line x1="38" y1="661.5" x2="40" y2="661.5" stroke="#707070"/>
<line x1="826" y1="661.5" x2="828" y2="661.5" stroke="#707070"/>
<rect x="57" y="958.9" width="9" height="28.1" fill="url(#gb)"/>
<rect x="57" y="958.9" width="9" height="1.2" fill="#10c8ff"/>
<rect x="57" y="958.9" width="1.2" height="28.1" fill="#10c8ff"/>
<rect x="66" y="958.9" width="9" height="28.1" fill="url(#go)"/>
<rect x="66" y="958.9" width="9" height="1.2" fill="#ff8c10"/>
<rect x="66" y="958.9" width="1.2" height="28.1" fill="#ff8c10"/>
<rect x="109" y="935.7" width="9" height="51.3" fill="url(#gb)"/>
<rect x="109" y="935.7" width="9" height="1.2" fill="#10c8ff"/>
<rect x="109" y="935.7" width="1.2" height="51.3" fill="#10c8ff"/>
<rect x="118" y="935.7" width="9" height="51.3" fill="url(#go)"/>
<rect x="118" y="935.7" width="9" height="1.2" fill="#ff8c10"/>
<rect x="118" y="935.7" width="1.2" height="51.3" fill="#ff8c10"/>
<rect x="161" y="917.7" width="9" height="69.3" fill="url(#gb)"/>
<rect x="161" y="917.7" width="9" height="1.2" fill="#10c8ff"/>
<rect x="161" y="917.7" width="1.2" height="69.3" fill="#10c8ff"/>
<rect x="170" y="886.8" width="9" height="100.2" fill="url(#go)"/>
<rect x="170" y="886.8" width="9" height="1.2" fill="#ff8c10"/>
<rect x="170" y="886.8" width="1.2" height="100.2" fill="#ff8c10"/>
<rect x="214" y="877.0" width="9" height="110.0" fill="url(#gb)"/>
<rect x="214" y="877.0" width="9" height="1.2" fill="#10c8ff"/>
<rect x="214" y="877.0" width="1.2" height="110.0" fill="#10c8ff"/>
<rect x="223" y="804.9" width="9" height="182.1" fill="url(#go)"/>
<rect x="223" y="804.9" width="9" height="1.2" fill="#ff8c10"/>
<rect x="223" y="804.9" width="1.2" height="182.1" fill="#ff8c10"/>
<rect x="266" y="713.6" width="9" height="273.4" fill="url(#gb)"/>
<rect x="266" y="713.6" width="9" height="1.2" fill="#10c8ff"/>
<rect x="266" y="713.6" width="1.2" height="273.4" fill="#10c8ff"/>
<rect x="275" y="716.9" width="9" height="270.1" fill="url(#go)"/>
<rect x="275" y="716.9" width="9" height="1.2" fill="#ff8c10"/>
<rect x="275" y="716.9" width="1.2" height="270.1" fill="#ff8c10"/>
<rect x="318" y="698.9" width="9" height="288.1" fill="url(#gb)"/>
<rect x="318" y="698.9" width="9" height="1.2" fill="#10c8ff"/>
<rect x="318" y="698.9" width="1.2" height="288.1" fill="#10c8ff"/>
<rect x="327" y="713.6" width="9" height="273.4" fill="url(#go)"/>
<rect x="327" y="713.6" width="9" height="1.2" fill="#ff8c10"/>
<rect x="327" y="713.6" width="1.2" height="273.4" fill="#ff8c10"/>
<rect x="371" y="698.9" width="9" height="288.1" fill="url(#gb)"/>
<rect x="371" y="698.9" width="9" height="1.2" fill="#10c8ff"/>
<rect x="371" y="698.9" width="1.2" height="288.1" fill="#10c8ff"/>
<rect x="380" y="715.6" width="9" height="271.4" fill="url(#go)"/>
<rect x="380" y="715.6" width="9" height="1.2" fill="#ff8c10"/>
<rect x="380" y="715.6" width="1.2" height="271.4" fill="#ff8c10"/>
<rect x="423" y="712.8" width="9" height="274.2" fill="url(#gb)"/>
<rect x="423" y="712.8" width="9" height="1.2" fill="#10c8ff"/>
<rect x="423" y="712.8" width="1.2" height="274.2" fill="#10c8ff"/>
<rect x="432" y="844.0" width="9" height="143.0" fill="url(#go)"/>
<rect x="432" y="844.0" width="9" height="1.2" fill="#ff8c10"/>
<rect x="432" y="844.0" width="1.2" height="143.0" fill="#ff8c10"/>
<rect x="475" y="701.0" width="9" height="286.0" fill="url(#gb)"/>
<rect x="475" y="701.0" width="9" height="1.2" fill="#10c8ff"/>
<rect x="475" y="701.0" width="1.2" height="286.0" fill="#10c8ff"/>
<rect x="484" y="705.9" width="9" height="281.1" fill="url(#go)"/>
<rect x="484" y="705.9" width="9" height="1.2" fill="#ff8c10"/>
<rect x="484" y="705.9" width="1.2" height="281.1" fill="#ff8c10"/>
<rect x="527" y="706.7" width="9" height="280.3" fill="url(#gb)"/>
<rect x="527" y="706.7" width="9" height="1.2" fill="#10c8ff"/>
<rect x="527" y="706.7" width="1.2" height="280.3" fill="#10c8ff"/>
<rect x="536" y="709.5" width="9" height="277.5" fill="url(#go)"/>
<rect x="536" y="709.5" width="9" height="1.2" fill="#ff8c10"/>
<rect x="536" y="709.5" width="1.2" height="277.5" fill="#ff8c10"/>
<rect x="580" y="717.7" width="9" height="269.3" fill="url(#gb)"/>
<rect x="580" y="717.7" width="9" height="1.2" fill="#10c8ff"/>
<rect x="580" y="717.7" width="1.2" height="269.3" fill="#10c8ff"/>
<rect x="589" y="710.7" width="9" height="276.3" fill="url(#go)"/>
<rect x="589" y="710.7" width="9" height="1.2" fill="#ff8c10"/>
<rect x="589" y="710.7" width="1.2" height="276.3" fill="#ff8c10"/>
<rect x="632" y="705.9" width="9" height="281.1" fill="url(#gb)"/>
<rect x="632" y="705.9" width="9" height="1.2" fill="#10c8ff"/>
<rect x="632" y="705.9" width="1.2" height="281.1" fill="#10c8ff"/>
<rect x="641" y="707.5" width="9" height="279.5" fill="url(#go)"/>
<rect x="641" y="707.5" width="9" height="1.2" fill="#ff8c10"/>
<rect x="641" y="707.5" width="1.2" height="279.5" fill="#ff8c10"/>
<rect x="684" y="725.8" width="9" height="261.2" fill="url(#gb)"/>
<rect x="684" y="725.8" width="9" height="1.2" fill="#10c8ff"/>
<rect x="684" y="725.8" width="1.2" height="261.2" fill="#10c8ff"/>
<rect x="693" y="717.7" width="9" height="269.3" fill="url(#go)"/>
<rect x="693" y="717.7" width="9" height="1.2" fill="#ff8c10"/>
<rect x="693" y="717.7" width="1.2" height="269.3" fill="#ff8c10"/>
<rect x="737" y="738.0" width="9" height="249.0" fill="url(#gb)"/>
<rect x="737" y="738.0" width="9" height="1.2" fill="#10c8ff"/>
<rect x="737" y="738.0" width="1.2" height="249.0" fill="#10c8ff"/>
<rect x="746" y="721.8" width="9" height="265.2" fill="url(#go)"/>
<rect x="746" y="721.8" width="9" height="1.2" fill="#ff8c10"/>
<rect x="746" y="721.8" width="1.2" height="265.2" fill="#ff8c10"/>
<rect x="789" y="718.9" width="9" height="268.1" fill="url(#gb)"/>
<rect x="789" y="718.9" width="9" height="1.2" fill="#10c8ff"/>
<rect x="789" y="718.9" width="1.2" height="268.1" fill="#10c8ff"/>
<rect x="798" y="714.0" width="9" height="273.0" fill="url(#go)"/>
<rect x="798" y="714.0" width="9" height="1.2" fill="#ff8c10"/>
<rect x="798" y="714.0" width="1.2" height="273.0" fill="#ff8c10"/>
</svg>

<!-- chart1 labels -->


<!-- table -->
<div class="a" style="left:48px;top:553px;width:729px;height:2px;background:#6e6e6e"></div>
<div class="a" style="left:231px;top:539px;width:2px;height:74px;background:#6e6e6e"></div>
<div class="a" style="left:315px;top:539px;width:2px;height:74px;background:#6e6e6e"></div>
<div class="a" style="left:162px;top:592px;width:35px;height:20px;border:1px solid #abadb3;border-left-color:#e2e3ea;border-bottom-color:#e3e9ef;background:#fff"></div>
<div class="a" style="left:180px;top:593px;width:15px;height:17px;border:1px solid #a9a9a9;background:#f4f4f4"></div><div class="a" style="left:181px;top:601px;width:13px;height:1px;background:#b0b0b0"></div><svg class="a" style="left:0;top:0;overflow:visible" width="1" height="1"><path d="M184.5 598.5L187.5 595.5L190.5 598.5Z" fill="#5868b8"/><path d="M184.5 604.5L187.5 607.5L190.5 604.5Z" fill="#5868b8"/></svg>

<div class="a" style="left:22px;top:621px;width:903px;height:1px;background:#a0a0a0"></div>
<div class="a" style="left:52px;top:628px;width:13px;height:13px;border:1px solid #8e8f8f;background:linear-gradient(135deg,#dcdcdc,#fafafa)"></div>
<svg class="a" style="left:54px;top:630px" width="10" height="10" viewBox="0 0 10 10"><path d="M1.5 5L4 8L8.5 1" stroke="#3a4ea0" stroke-width="1.8" fill="none"/></svg>

<!-- chart2 labels -->


<div class="a" style="left:762px;top:648px;width:9px;height:9px;border:1px solid #10c0f0;background:linear-gradient(#006890,#00b0e0)"></div>
<div class="a" style="left:798px;top:648px;width:9px;height:9px;border:1px solid #ff8c10;background:linear-gradient(#7c3c00,#e07000)"></div>

<!-- right controls -->
<div class="a" style="left:854px;top:129px;width:73px;height:21px;border:1px solid #3c7fb1;border-radius:3px;box-shadow:inset 0 0 0 1px #40d4ff;background:linear-gradient(#f2f7fa 0%,#e6f0f5 45%,#d0e4ef 52%,#c0dbe9 100%)"></div>
<div class="btn" style="left:853px;top:176px;width:75px;height:21px"></div>
<svg class="a" style="left:915px;top:185px" width="9" height="6"><path d="M0 0H8L4 5Z" fill="#000"/></svg>
<div class="a" style="left:853px;top:228px;width:56px;height:20px;border:1px solid #abadb3;border-left-color:#e2e3ea;border-bottom-color:#e3e9ef;background:#fff"></div>
<div class="a" style="left:891px;top:229px;width:16px;height:17px;border:1px solid #a9a9a9;background:#f4f4f4"></div><div class="a" style="left:892px;top:237px;width:14px;height:1px;background:#b0b0b0"></div><svg class="a" style="left:0;top:0;overflow:visible" width="1" height="1"><path d="M896.0 234.5L899.0 231.5L902.0 234.5Z" fill="#5868b8"/><path d="M896.0 240.5L899.0 243.5L902.0 240.5Z" fill="#5868b8"/></svg>
<div class="btn" style="left:853px;top:284px;width:75px;height:21px"></div>
<svg class="a" style="left:915px;top:293px" width="9" height="6"><path d="M0 0H8L4 5Z" fill="#000"/></svg>

<div class="btn" style="left:853px;top:916px;width:75px;height:21px"></div>
<svg class="a" style="left:915px;top:924px" width="9" height="6"><path d="M0 0H8L4 5Z" fill="#000"/></svg>
<div class="a" style="left:855px;top:968px;width:54px;height:20px;border:1px solid #abadb3;border-left-color:#e2e3ea;border-bottom-color:#e3e9ef;background:#fff"></div>
<div class="a" style="left:913px;top:967px;width:15px;height:10px;border:1px solid #a9a9a9;background:linear-gradient(#f6f6f6,#e6e6e6)"></div>
<div class="a" style="left:913px;top:978px;width:15px;height:10px;border:1px solid #a9a9a9;background:linear-gradient(#f6f6f6,#e6e6e6)"></div>
<svg class="a" style="left:0;top:0;overflow:visible" width="1" height="1"><path d="M917.5 973.5L920.5 970.5L923.5 973.5Z" fill="#5868b8"/><path d="M917.5 981.5L920.5 984.5L923.5 981.5Z" fill="#5868b8"/></svg>

<!-- watermark -->
<svg class="a" style="left:660px;top:960px" width="80" height="73" viewBox="660 960 80 73">
<defs>
<linearGradient id="wm" x1="0" y1="0" x2="1" y2="1"><stop offset="0" stop-color="rgb(150,175,235)" stop-opacity=".45"/><stop offset=".5" stop-color="rgb(200,210,245)" stop-opacity=".55"/><stop offset="1" stop-color="rgb(130,145,225)" stop-opacity=".7"/></linearGradient>
</defs>
<path d="M694 968.5 Q690 968 688 972 L671 1008 Q669 1012 673 1013.5 L719 1026 Q723 1027 725 1023 L734 983 Q735 979 731 978 Z" fill="url(#wm)" stroke="rgba(190,190,200,.8)" stroke-width="2.2"/>
<path d="M696 985 L709 1006 M716 990 L701 999" stroke="rgba(255,255,255,.85)" stroke-width="3.2" stroke-linecap="round"/>
</svg>
<div class="t" style="left:735px;top:990px;font-size:21px;color:rgba(120,140,200,.55);transform:scaleX(.92);transform-origin:0 0;-webkit-text-stroke:0.6px rgba(120,140,200,.55);text-shadow:0 0 2px rgba(255,255,255,.9)">xtremehardware.com</div>
<div class="t" style="top:5.64px;font-size:12px;left:28.4px;transform:scaleX(0.995);transform-origin:0 0;-webkit-text-stroke:0;">HD Tune Pro 5.00 - Hard Disk Utility</div>
<div class="t" style="top:30.84px;font-size:12px;left:13.8px;transform:scaleX(0.94);transform-origin:0 0;"><u>F</u>ile</div>
<div class="t" style="top:30.84px;font-size:12px;left:50.3px;transform:scaleX(0.98);transform-origin:0 0;"><u>H</u>elp</div>
<div class="t" style="top:59.84px;font-size:12px;left:22.4px;transform:scaleX(0.833);transform-origin:0 0;">SPCCN</div>
<div class="t" style="top:59.84px;font-size:12px;left:67.8px;transform:scaleX(0.885);transform-origin:0 0;">PHD 3.0</div>
<div class="t" style="top:59.84px;font-size:12px;left:137.5px;transform:scaleX(0.887);transform-origin:0 0;">(640 gB)</div>
<div class="t" style="top:60.59px;font-size:12.3px;font-weight:700;left:649.1px;transform:scaleX(1.0);transform-origin:0 0;">29°C</div>
<div class="t" style="top:60.34px;font-size:12px;left:904.2px;transform:scaleX(0.8);transform-origin:0 0;">Exit</div>
<div class="t" style="top:99.64px;font-size:12px;left:49.2px;transform:scaleX(0.87);transform-origin:0 0;">Benchmark</div>
<div class="t" style="top:99.64px;font-size:12px;left:138.4px;transform:scaleX(0.87);transform-origin:0 0;">Info</div>
<div class="t" style="top:99.64px;font-size:12px;left:191.4px;transform:scaleX(0.87);transform-origin:0 0;">Health</div>
<div class="t" style="top:99.64px;font-size:12px;left:257px;transform:scaleX(0.87);transform-origin:0 0;">Error Scan</div>
<div class="t" style="top:99.64px;font-size:12px;left:342.5px;transform:scaleX(0.87);transform-origin:0 0;">Folder Usage</div>
<div class="t" style="top:99.64px;font-size:12px;left:440px;transform:scaleX(0.87);transform-origin:0 0;">Erase</div>
<div class="t" style="top:99.64px;font-size:12px;left:610.6px;transform:scaleX(0.87);transform-origin:0 0;">Disk monitor</div>
<div class="t" style="top:99.64px;font-size:12px;left:702.7px;transform:scaleX(0.87);transform-origin:0 0;">AAM</div>
<div class="t" style="top:99.64px;font-size:12px;left:761px;transform:scaleX(0.87);transform-origin:0 0;">Random Access</div>
<div class="t" style="top:99.64px;font-size:12px;left:874px;transform:scaleX(0.87);transform-origin:0 0;">Extra tests</div>
<div class="t" style="top:97.64px;font-size:12px;left:502.2px;transform:scaleX(0.87);transform-origin:0 0;">File Benchmark</div>
<div class="t" style="top:129.84px;font-size:12px;left:68.6px;transform:scaleX(0.87);transform-origin:0 0;">Transfer speed</div>
<div class="t" style="top:146.84px;font-size:12px;left:52px;transform:scaleX(0.87);transform-origin:0 0;">MB/s</div>
<div class="t" style="top:146.84px;font-size:12px;left:790px;transform:scaleX(0.87);transform-origin:0 0;">ms</div>
<div class="t" style="top:154.14px;font-size:12px;right:907.4px;transform:scaleX(0.87);transform-origin:100% 0;">200</div>
<div class="t" style="top:244.14px;font-size:12px;right:907.4px;transform:scaleX(0.87);transform-origin:100% 0;">150</div>
<div class="t" style="top:334.14px;font-size:12px;right:907.4px;transform:scaleX(0.87);transform-origin:100% 0;">100</div>
<div class="t" style="top:424.14px;font-size:12px;right:907.4px;transform:scaleX(0.87);transform-origin:100% 0;">50</div>
<div class="t" style="top:154.14px;font-size:12px;left:809px;transform:scaleX(0.87);transform-origin:0 0;">40</div>
<div class="t" style="top:244.14px;font-size:12px;left:809px;transform:scaleX(0.87);transform-origin:0 0;">30</div>
<div class="t" style="top:334.14px;font-size:12px;left:809px;transform:scaleX(0.87);transform-origin:0 0;">20</div>
<div class="t" style="top:424.14px;font-size:12px;left:809px;transform:scaleX(0.87);transform-origin:0 0;">10</div>
<div class="t" style="top:525.34px;font-size:12px;left:52.0px;transform:translateX(-50%) scaleX(0.87);transform-origin:50% 0;">0</div>
<div class="t" style="top:525.34px;font-size:12px;left:127.2px;transform:translateX(-50%) scaleX(0.87);transform-origin:50% 0;">50</div>
<div class="t" style="top:525.34px;font-size:12px;left:202.5px;transform:translateX(-50%) scaleX(0.87);transform-origin:50% 0;">100</div>
<div class="t" style="top:525.34px;font-size:12px;left:277.8px;transform:translateX(-50%) scaleX(0.87);transform-origin:50% 0;">150</div>
<div class="t" style="top:525.34px;font-size:12px;left:353.0px;transform:translateX(-50%) scaleX(0.87);transform-origin:50% 0;">200</div>
<div class="t" style="top:525.34px;font-size:12px;left:428.2px;transform:translateX(-50%) scaleX(0.87);transform-origin:50% 0;">250</div>
<div class="t" style="top:525.34px;font-size:12px;left:503.5px;transform:translateX(-50%) scaleX(0.87);transform-origin:50% 0;">300</div>
<div class="t" style="top:525.34px;font-size:12px;left:578.8px;transform:translateX(-50%) scaleX(0.87);transform-origin:50% 0;">350</div>
<div class="t" style="top:525.34px;font-size:12px;left:654.0px;transform:translateX(-50%) scaleX(0.87);transform-origin:50% 0;">400</div>
<div class="t" style="top:525.34px;font-size:12px;left:729.2px;transform:translateX(-50%) scaleX(0.87);transform-origin:50% 0;">450</div>
<div class="t" style="top:525.34px;font-size:12px;left:787.5px;transform:scaleX(0.87);transform-origin:0 0;">500mB</div>
<div class="t" style="top:540.14px;font-size:12px;left:260.2px;transform:scaleX(0.87);transform-origin:0 0;">Read</div>
<div class="t" style="top:540.14px;font-size:12px;left:347.2px;transform:scaleX(0.87);transform-origin:0 0;">Write</div>
<div class="t" style="top:558.84px;font-size:12px;left:52px;transform:scaleX(0.865);transform-origin:0 0;">Sequential</div>
<div class="t" style="top:578.84px;font-size:12px;left:51px;transform:scaleX(0.86);transform-origin:0 0;">4 KB random single</div>
<div class="t" style="top:597.84px;font-size:12px;left:51px;transform:scaleX(0.86);transform-origin:0 0;">4 KB random multi</div>
<div class="t" style="top:596.44px;font-size:12px;left:165px;transform:scaleX(0.87);transform-origin:0 0;">32</div>
<div class="t" style="top:558.84px;font-size:12px;font-weight:700;right:642.4px;transform:scaleX(1.02);transform-origin:100% 0;">80595 KB/s</div>
<div class="t" style="top:578.84px;font-size:12px;font-weight:700;right:642.4px;transform:scaleX(1.02);transform-origin:100% 0;">72 IOPS</div>
<div class="t" style="top:597.84px;font-size:12px;font-weight:700;right:642.4px;transform:scaleX(1.02);transform-origin:100% 0;">42 IOPS</div>
<div class="t" style="top:558.84px;font-size:12px;font-weight:700;right:555.2px;transform:scaleX(1.02);transform-origin:100% 0;">69191 KB/s</div>
<div class="t" style="top:578.84px;font-size:12px;font-weight:700;right:555.2px;transform:scaleX(1.02);transform-origin:100% 0;">262 IOPS</div>
<div class="t" style="top:597.84px;font-size:12px;font-weight:700;right:555.2px;transform:scaleX(1.02);transform-origin:100% 0;">243 IOPS</div>
<div class="t" style="top:629.04px;font-size:12px;left:68.2px;transform:scaleX(0.865);transform-origin:0 0;">Block size measurement</div>
<div class="t" style="top:646.14px;font-size:12px;left:40.4px;transform:scaleX(0.87);transform-origin:0 0;">MB/s</div>
<div class="t" style="top:940.34px;font-size:12px;right:919.6px;transform:scaleX(0.87);transform-origin:100% 0;">10</div>
<div class="t" style="top:899.54px;font-size:12px;right:919.6px;transform:scaleX(0.87);transform-origin:100% 0;">20</div>
<div class="t" style="top:858.84px;font-size:12px;right:919.6px;transform:scaleX(0.87);transform-origin:100% 0;">30</div>
<div class="t" style="top:818.04px;font-size:12px;right:919.6px;transform:scaleX(0.87);transform-origin:100% 0;">40</div>
<div class="t" style="top:777.34px;font-size:12px;right:919.6px;transform:scaleX(0.87);transform-origin:100% 0;">50</div>
<div class="t" style="top:736.64px;font-size:12px;right:919.6px;transform:scaleX(0.87);transform-origin:100% 0;">60</div>
<div class="t" style="top:695.84px;font-size:12px;right:919.6px;transform:scaleX(0.87);transform-origin:100% 0;">70</div>
<div class="t" style="top:655.14px;font-size:12px;right:919.6px;transform:scaleX(0.87);transform-origin:100% 0;">80</div>
<div class="t" style="top:993.04px;font-size:12px;left:66px;transform:translateX(-50%) scaleX(0.87);transform-origin:50% 0;">0.5</div>
<div class="t" style="top:993.04px;font-size:12px;left:118px;transform:translateX(-50%) scaleX(0.87);transform-origin:50% 0;">1</div>
<div class="t" style="top:993.04px;font-size:12px;left:170px;transform:translateX(-50%) scaleX(0.87);transform-origin:50% 0;">2</div>
<div class="t" style="top:993.04px;font-size:12px;left:223px;transform:translateX(-50%) scaleX(0.87);transform-origin:50% 0;">4</div>
<div class="t" style="top:993.04px;font-size:12px;left:275px;transform:translateX(-50%) scaleX(0.87);transform-origin:50% 0;">8</div>
<div class="t" style="top:993.04px;font-size:12px;left:327px;transform:translateX(-50%) scaleX(0.87);transform-origin:50% 0;">16</div>
<div class="t" style="top:993.04px;font-size:12px;left:380px;transform:translateX(-50%) scaleX(0.87);transform-origin:50% 0;">32</div>
<div class="t" style="top:993.04px;font-size:12px;left:432px;transform:translateX(-50%) scaleX(0.87);transform-origin:50% 0;">64</div>
<div class="t" style="top:993.04px;font-size:12px;left:484px;transform:translateX(-50%) scaleX(0.87);transform-origin:50% 0;">128</div>
<div class="t" style="top:993.04px;font-size:12px;left:536px;transform:translateX(-50%) scaleX(0.87);transform-origin:50% 0;">256</div>
<div class="t" style="top:993.04px;font-size:12px;left:589px;transform:translateX(-50%) scaleX(0.87);transform-origin:50% 0;">512</div>
<div class="t" style="top:993.04px;font-size:12px;left:641px;transform:translateX(-50%) scaleX(0.87);transform-origin:50% 0;">1024</div>
<div class="t" style="top:993.04px;font-size:12px;left:693px;transform:translateX(-50%) scaleX(0.87);transform-origin:50% 0;">2048</div>
<div class="t" style="top:993.04px;font-size:12px;left:746px;transform:translateX(-50%) scaleX(0.87);transform-origin:50% 0;">4096</div>
<div class="t" style="top:993.04px;font-size:12px;left:798px;transform:translateX(-50%) scaleX(0.87);transform-origin:50% 0;">8192</div>
<div class="t" style="top:646.34px;font-size:12px;left:771.5px;transform:scaleX(0.9);transform-origin:0 0;">read</div>
<div class="t" style="top:646.34px;font-size:12px;left:807.5px;transform:scaleX(0.95);transform-origin:0 0;">write</div>
<div class="t" style="top:133.84px;font-size:12px;left:889.6px;transform:translateX(-50%) scaleX(0.82);transform-origin:50% 0;">Start</div>
<div class="t" style="top:158.84px;font-size:12px;left:853.5px;transform:scaleX(0.87);transform-origin:0 0;">Drive</div>
<div class="t" style="top:181.34px;font-size:12px;left:856px;transform:scaleX(0.87);transform-origin:0 0;">G:</div>
<div class="t" style="top:204.04px;font-size:12px;left:853.5px;transform:scaleX(0.87);transform-origin:0 0;">File length</div>
<div class="t" style="top:231.84px;font-size:12px;left:856px;transform:scaleX(0.87);transform-origin:0 0;">500</div>
<div class="t" style="top:234.84px;font-size:12px;left:910.6px;transform:scaleX(0.82);transform-origin:0 0;">MB</div>
<div class="t" style="top:266.44px;font-size:12px;left:853.5px;transform:scaleX(0.87);transform-origin:0 0;">Data pattern</div>
<div class="t" style="top:288.24px;font-size:12px;left:856px;transform:scaleX(0.87);transform-origin:0 0;">Zero</div>
<div class="t" style="top:895.04px;font-size:12px;left:855.4px;transform:scaleX(0.87);transform-origin:0 0;">File length</div>
<div class="t" style="top:920.84px;font-size:12px;left:857px;transform:scaleX(0.87);transform-origin:0 0;">64 MB</div>
<div class="t" style="top:948.84px;font-size:12px;left:855.4px;transform:scaleX(0.87);transform-origin:0 0;">Delay</div>
<div class="t" style="top:971.84px;font-size:12px;left:858px;transform:scaleX(0.87);transform-origin:0 0;">0</div>


</body></html>
